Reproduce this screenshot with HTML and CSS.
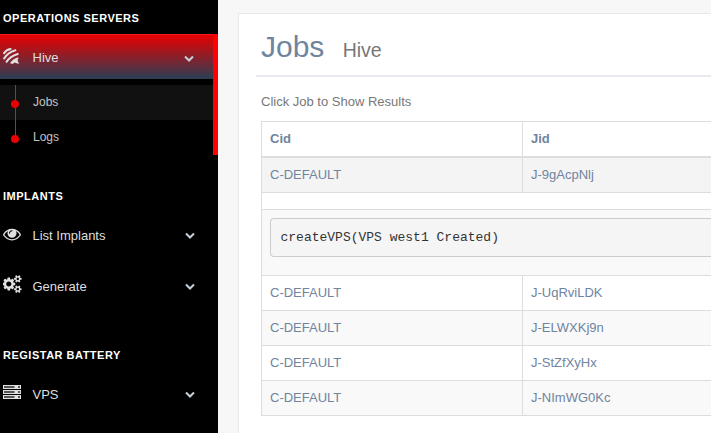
FILE: index.html
```html
<!DOCTYPE html>
<html lang="en">
<head>
<meta charset="utf-8">
<title>Jobs</title>
<link rel="stylesheet" href="styles.css">
</head>
<body>
<nav class="sidebar">
  <h3>OPERATIONS SERVERS</h3>
  <div class="active">
    <a class="item current"><svg class="icon bee" viewBox="0 0 16 16"><g fill="none" stroke="currentColor" stroke-width="2" stroke-linecap="round"><path d="M1 5.2Q3.2 1.8 7.6 1M1.1 10.4Q4.6 4.6 12.4 2.2M3.6 13.8Q7 8.4 14.8 6"/></g><path d="M7 15.2Q9.6 10.9 15.2 9.2L15.4 11.2L14.4 11.8L16 16L11.4 14.4L10.6 15.4Q8.6 16 7 15.2Z" fill="currentColor"/></svg><span>Hive</span><svg class="chevron" viewBox="0 0 10 8"><path d="M1 1.6L5 5.5L9 1.6"/></svg></a>
    <div class="submenu"><a class="sub selected">Jobs</a><a class="sub">Logs</a></div>
  </div>
  <h3 class="implants">IMPLANTS</h3>
  <a class="item"><svg class="icon eye" viewBox="0 0 1792 1792"><path fill="currentColor" d="M1664 960q-152-236-381-353 61 104 61 225 0 185-131.5 316.5t-316.5 131.5-316.5-131.5-131.5-316.5q0-121 61-225-229 117-381 353 133 205 333.5 326.5t434.5 121.5 434.5-121.5 333.5-326.5zm-720-384q0-20-14-34t-34-14q-125 0-214.5 89.5t-89.5 214.5q0 20 14 34t34 14 34-14 14-34q0-86 61-147t147-61q20 0 34-14t14-34zm848 384q0 34-20 69-140 230-376.5 368.5t-499.5 138.5-499.5-139-376.5-368q-20-35-20-69t20-69q140-229 376.5-368t499.5-139 499.5 139 376.5 368q20 35 20 69z"/></svg><span>List Implants</span><svg class="chevron" viewBox="0 0 10 8"><path d="M1 1.6L5 5.5L9 1.6"/></svg></a>
  <a class="item"><svg class="icon cogs" viewBox="0 0 1920 1792"><path fill="currentColor" d="M832 896q0-106-75-181t-181-75-181 75-75 181 75 181 181 75 181-75 75-181zm768 512q0-52-38-90t-90-38-90 38-38 90q0 53 37.5 90.5t90.5 37.5 90.5-37.5 37.5-90.5zm0-1024q0-52-38-90t-90-38-90 38-38 90q0 53 37.5 90.5t90.5 37.5 90.5-37.5 37.5-90.5zm-384 421v185q0 10-7 19.5t-16 10.5l-155 24q-11 35-32 76 34 48 90 115 7 11 7 20 0 12-7 19-23 30-82.5 89.5t-78.5 59.5q-11 0-21-7l-115-90q-37 19-77 31-11 108-23 155-7 24-30 24h-186q-11 0-20-7.5t-10-17.5l-23-153q-34-10-75-31l-118 89q-7 7-20 7-11 0-21-8-144-133-144-160 0-9 7-19 10-14 41-53t47-61q-23-44-35-82l-152-24q-10-1-17-9.5t-7-19.5v-185q0-10 7-19.5t16-10.5l155-24q11-35 32-76-34-48-90-115-7-11-7-20 0-12 7-20 22-30 82-89t79-59q11 0 21 7l115 90q34-18 77-32 11-108 23-154 7-24 30-24h186q11 0 20 7.5t10 17.5l23 153q34 10 75 31l118-89q8-7 20-7 11 0 21 8 144 133 144 160 0 8-7 19-12 16-42 54t-45 60q23 48 34 82l152 23q10 2 17 10.5t7 19.5zm640 533v140q0 16-149 31-12 27-30 52 51 113 51 138 0 4-4 7-122 71-124 71-8 0-46-47t-52-68q-20 2-30 2t-30-2q-14 21-52 68t-46 47q-2 0-124-71-4-3-4-7 0-25 51-138-18-25-30-52-149-15-149-31v-140q0-16 149-31 13-29 30-52-51-113-51-138 0-4 4-7 4-2 35-20t59-34 30-16q8 0 46 46.5t52 67.5q20-2 30-2t30 2q51-71 92-112l6-2q4 0 124 70 4 3 4 7 0 25-51 138 17 23 30 52 149 15 149 31zm0-1024v140q0 16-149 31-12 27-30 52 51 113 51 138 0 4-4 7-122 71-124 71-8 0-46-47t-52-68q-20 2-30 2t-30-2q-14 21-52 68t-46 47q-2 0-124-71-4-3-4-7 0-25 51-138-18-25-30-52-149-15-149-31v-140q0-16 149-31 13-29 30-52-51-113-51-138 0-4 4-7 4-2 35-20t59-34 30-16q8 0 46 46.5t52 67.5q20-2 30-2t30 2q51-71 92-112l6-2q4 0 124 70 4 3 4 7 0 25-51 138 17 23 30 52 149 15 149 31z"/></svg><span>Generate</span><svg class="chevron" viewBox="0 0 10 8"><path d="M1 1.6L5 5.5L9 1.6"/></svg></a>
  <h3 class="battery">REGISTAR BATTERY</h3>
  <a class="item"><svg class="icon server" viewBox="0 0 18 14"><path fill="currentColor" d="M0 0h18v4H0zM0 5h18v4H0zM0 10h18v4H0z"/><path fill="#555" d="M1 1h10.5v2H1zM1 6h10.5v2H1zM1 11h10.5v2H1zM15 1h2v2h-2zM15 6h2v2h-2zM15 11h2v2h-2z"/></svg><span>VPS</span><svg class="chevron" viewBox="0 0 10 8"><path d="M1 1.6L5 5.5L9 1.6"/></svg></a>
</nav>
<main>
  <section class="panel">
    <header><h1>Jobs</h1><small>Hive</small></header>
    <p>Click Job to Show Results</p>
    <div class="table">
      <div class="row head"><span>Cid</span><span>Jid</span></div>
      <div class="row hover"><span>C-DEFAULT</span><span>J-9gAcpNlj</span></div>
      <div class="spacer"></div>
      <div class="result"><pre>createVPS(VPS west1 Created)</pre></div>
      <div class="row"><span>C-DEFAULT</span><span>J-UqRviLDK</span></div>
      <div class="row odd"><span>C-DEFAULT</span><span>J-ELWXKj9n</span></div>
      <div class="row"><span>C-DEFAULT</span><span>J-StZfXyHx</span></div>
      <div class="row odd"><span>C-DEFAULT</span><span>J-NImWG0Kc</span></div>
    </div>
  </section>
</main>
</body>
</html>
```
FILE: styles.css
```css
* { box-sizing: border-box; }
body {
  margin: 0;
  display: flex;
  height: 433px;
  overflow: hidden;
  background: #f7f7f7;
  color: #6f849f;
  font: 13px/18px "Liberation Sans", Arial, sans-serif;
}
.sidebar { width: 218px; flex: none; background: #000; color: #dedede; }
h3 {
  margin: 0;
  height: 34px;
  padding: 9px 3px 0;
  color: #fff;
  font-size: 11px;
  line-height: 18px;
  letter-spacing: .5px;
}
.active { height: 121px; border-right: 5px solid #f00; }
.item {
  display: flex;
  align-items: center;
  height: 51px;
  padding: 0 23px 0 3px;
}
.item span { flex: 1; padding-top: 1px; }
.icon { width: 18px; height: 18px; margin-right: 11.5px; flex: none; color: #e0e0e0; }
.bee { width: 16px; height: 16px; margin: -3px 13.5px 0 0; }
.eye { margin-top: -4px; }
.cogs { width: 19.3px; margin: -5px 10.2px 0 0; }
.server { height: 14px; margin-top: -5px; }
.chevron { width: 10px; height: 8px; flex: none; margin-top: 1px; }
.chevron path { fill: none; stroke: #c4cfda; stroke-width: 2.1; }
.item.current {
  height: 45px;
  padding-right: 19px;
  border-top: 1px solid #f31b1b;
  background: linear-gradient(#e80000, #2a3f54);
}
.current .chevron { margin-top: 3px; }
.submenu {
  padding-top: 6px;
  background: linear-gradient(#425668, #425668) 15px 6px / 1px 54px no-repeat;
}
.sub {
  display: flex;
  align-items: center;
  height: 35px;
  padding: 0 0 2px 11px;
  color: #c4c4c4;
  font-size: 12px;
}
.selected {
  background: linear-gradient(#425668, #425668) 15px 0 / 1px 35px no-repeat #111;
}
.sub::before {
  content: "";
  width: 8px;
  height: 8px;
  margin: 5px 14px 0 0;
  border-radius: 50%;
  background: #ea0000;
}
.implants { height: 55px; padding-top: 32px; }
.battery { height: 57px; padding-top: 34px; }
main { flex: 1; min-width: 0; padding: 13px 0 0 20px; }
.panel {
  height: 420px;
  padding: 10px 0 0 17px;
  border: solid #e6e9ed;
  border-width: 1px 0 0 1px;
  background: #fff;
}
header {
  display: flex;
  align-items: baseline;
  height: 53px;
  padding: 4px 5px 0;
  border-bottom: 2px solid #e6e9ed;
}
h1 { margin: 0; font-size: 30px; line-height: 38px; font-weight: 400; }
small { margin-left: 18.3px; color: #777; font-size: 19.5px; }
p { margin: 16px 5px 10px; color: #777; }
.table { margin-left: 5px; border: solid #ddd; border-width: 1px 0 0 1px; }
.row {
  display: grid;
  grid-template-columns: 261px 1fr;
  height: 35px;
  border-bottom: 1px solid #ddd;
}
.row span { padding: 8px; line-height: 18px; }
.row span:first-child { border-right: 1px solid #ddd; }
.head { height: 36px; border-bottom-width: 2px; font-weight: 700; }
.hover { background: #f4f4f4; }
.odd { background: #f9f9f9; }
.spacer { height: 17px; border-bottom: 1px solid #ddd; }
.result { height: 66px; padding: 8px 0 0 8px; background: #f9f9f9; border-bottom: 1px solid #ddd; }
pre {
  height: 39px;
  margin: 0;
  padding: 9.5px;
  border: 1px solid #ccc;
  border-right: 0;
  border-radius: 4px 0 0 4px;
  background: #f5f5f5;
  color: #333;
  font: 13px/18.57px "Liberation Mono", monospace;
}
```
